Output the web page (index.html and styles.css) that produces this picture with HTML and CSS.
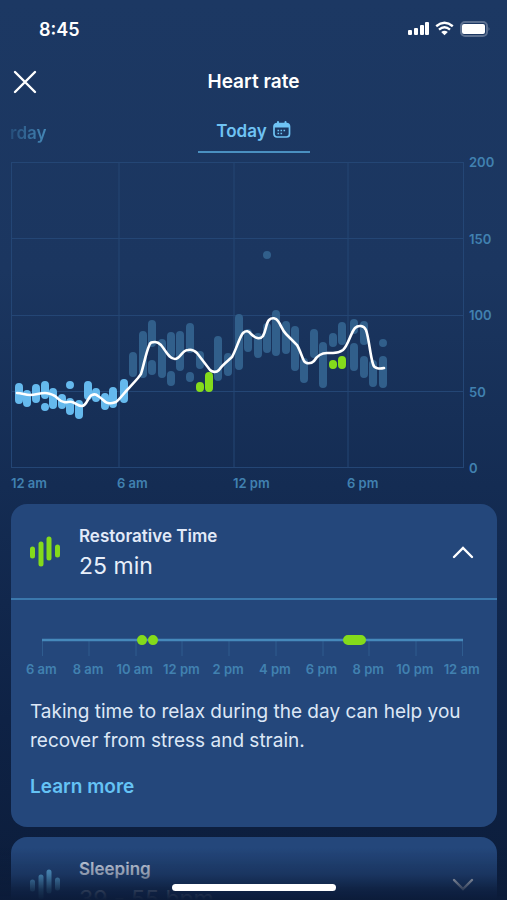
FILE: index.html
```html
<!DOCTYPE html>
<html lang="en">
<head>
    <meta charset="UTF-8">
    <meta name="viewport" content="width=device-width, initial-scale=1.0">
    <title>Heart rate</title>
    <link rel="stylesheet" href="styles.css">
</head>
<body>

    <div class="screen">
        <div class="status-bar">
            <span class="time">8:45</span>
            <svg class="status-icons" width="82" height="16" viewBox="0 0 82 16" aria-hidden="true">
                <g fill="#fff">
                    <rect x="0" y="9" width="4" height="5" rx="1"/>
                    <rect x="6" y="7" width="4" height="7" rx="1"/>
                    <rect x="12" y="4" width="4" height="10" rx="1"/>
                    <rect x="17" y="1" width="4" height="13" rx="1"/>
                    <path d="M36.500 14.200L33.200 11Q36.500 8.600 39.800 11Z"/>
                </g>
                <path d="M28.200 5.200Q36.500 -1.600 44.800 5.200M31 8.600Q36.500 4 42 8.600" fill="none" stroke="#fff" stroke-width="2.400"/>
                <rect x="53" y="1" width="26" height="14" rx="4" fill="none" stroke="#5c7090" stroke-width="2"/>
                <rect x="54" y="3" width="23" height="10" rx="2" fill="#fff"/>
                <path d="M80.500 6Q82.500 8 80.500 10Z" fill="#5c7090"/>
            </svg>
        </div>

        <header class="top-bar">
            <button class="close" aria-label="Close">
                <svg width="24" height="24" viewBox="0 0 24 24"><path d="M2 2L22 22M22 2L2 22"/></svg>
            </button>
            <h1>Heart rate</h1>
        </header>

        <nav class="days">
            <a href="#" class="day previous" aria-label="Yesterday">rday</a>
            <a href="#" class="day current">Today
                <svg width="18" height="18" viewBox="0 0 18 18" aria-hidden="true">
                    <rect x="1" y="2.500" width="15.500" height="13.500" rx="3" fill="none" stroke="currentColor" stroke-width="1.700"/>
                    <path d="M1 6.500V5Q1 2.500 4 2.500H13.500Q16.500 2.500 16.500 5V6.500Z" fill="currentColor"/>
                    <path d="M5 1V4M12.500 1V4" stroke="currentColor" stroke-width="2" stroke-linecap="round"/>
                    <path d="M4.500 9.500H13.500M4.500 12.500H10" stroke="currentColor" stroke-width="1.600" stroke-dasharray="1.600 1.400"/>
                </svg>
            </a>
        </nav>

        <section class="chart">
            <svg class="plot" viewBox="0 0 453 306" role="img" aria-label="Heart rate today">
                <path class="grid-line" d="M0 .5H453M0 76.500H453M0 153.500H453M0 229.500H453M0 305.500H453M.5 0V306M108 0V306M223 0V306M337 0V306M452.500 0V306"/>
                <!-- awake -->
                <path class="bar awake" d="M122 194V211M132 173V212M141 162V181M141 202V209M151 181V212M160 174V192M160 213V220M169 173V205M179 165V187M179 214V216M189 193V203M207 178V215M217 195V210M228 156V204M237 171V186M247 175V192M256 165V187M265 152V190M275 163V188M284 168V205M293 200V217M303 171V192M312 184V222M322 175V181M331 164V179M343 161V168M343 185V205M353 163V179M353 198V212M362 202V221M372 181V181.100M372 198V222M256 93V93.100"/>
                <!-- asleep -->
                <path class="bar asleep" d="M8 225V238M16 232V241M25 226V237M34 223V233M34 245V245.100M42 230V243M51 236V243M59 223V223.100M59 240V249M68 242V253M77 223V234M85 230V236M94 235V244M102 229V242M113 221V237"/>
                <!-- restorative -->
                <path class="bar restorative" d="M189 224V226M198 214V226M322 202V203M331 198V203"/>
                <path class="rate" d="M6 231C11 231 14 233 19 233C25 233 28 231 34 231C38 231 40 232 44 234C48 237 49 240 53 240C56 241 58 239 61 240C65 241 67 244 71 244C76 244 77 234 81 233C83 232 85 232 87 234C92 237 94 241 97 241C101 242 102 241 105 240C110 236 113 231 117 227L127 216L130 212C133 202 135 191 138 184C139 180 141 180 144 180C147 180 148 181 150 183C155 189 158 197 164 197C169 197 171 188 177 188C181 187 183 188 186 191L199 208C201 210 205 211 208 208C212 202 217 199 221 195C225 188 229 174 232 171C235 168 238 169 240 172C244 176 249 178 252 174C255 169 255 161 258 158C261 155 265 156 267 159C270 163 271 168 275 172L286 183C289 188 291 195 293 199C295 202 300 202 303 199C306 194 311 191 316 191H322C326 191 329 190 332 188C337 184 340 170 344 166C347 163 353 163 355 168C358 176 359 193 362 202C363 207 369 207 373 206"/>
            </svg>
            <div class="y-axis">
                <span>200</span>
                <span>150</span>
                <span>100</span>
                <span>50</span>
                <span>0</span>
            </div>
            <div class="x-axis">
                <span>12 am</span>
                <span>6 am</span>
                <span>12 pm</span>
                <span>6 pm</span>
            </div>
        </section>

        <section class="card">
            <div class="card-head">
                <svg class="wave green" width="30" height="32" viewBox="0 0 30 32" aria-hidden="true">
                    <path d="M2.500 13V20M11 8V28M19 3V22M27.500 11V19"/>
                </svg>
                <div class="card-title">
                    <h2>Restorative Time</h2>
                    <p>25 min</p>
                </div>
                <button class="toggle" aria-label="Collapse" aria-expanded="true">
                    <svg width="22" height="14" viewBox="0 0 22 14"><path d="M2 12L11 3L20 12"/></svg>
                </button>
            </div>

            <div class="card-body">
                <svg class="timeline" viewBox="0 0 421 22" aria-hidden="true">
                    <path class="tick" d="M.5 6V22M47 6V22M94 6V22M140 6V22M187 6V22M234 6V22M281 6V22M327 6V22M374 6V22M420.500 6V22"/>
                    <path class="track" d="M0 6H421"/>
                    <path class="span" d="M100 6V6.100M111 6V6.100M306 6H319"/>
                </svg>
                <div class="hours">
                    <span>6 am</span>
                    <span>8 am</span>
                    <span>10 am</span>
                    <span>12 pm</span>
                    <span>2 pm</span>
                    <span>4 pm</span>
                    <span>6 pm</span>
                    <span>8 pm</span>
                    <span>10 pm</span>
                    <span>12 am</span>
                </div>
                <p class="text">Taking time to relax during the day can help you recover from stress and strain.</p>
                <a href="#" class="more">Learn more</a>
            </div>
        </section>

        <section class="card">
            <div class="card-head">
                <svg class="wave blue" width="30" height="32" viewBox="0 0 30 32" aria-hidden="true">
                    <path d="M2.500 13V20M11 8V28M19 3V22M27.500 11V19"/>
                </svg>
                <div class="card-title">
                    <h2>Sleeping</h2>
                    <p>39 - 55 bpm</p>
                </div>
                <button class="toggle" aria-label="Expand" aria-expanded="false">
                    <svg width="22" height="14" viewBox="0 0 22 14"><path d="M2 2L11 11L20 2"/></svg>
                </button>
            </div>
        </section>
    </div>

    <div class="fade"></div>
    <div class="home-indicator"></div>

</body>
</html>
```
FILE: styles.css
```css
* {
    box-sizing: border-box;
}

body {
    margin: 0;
    font-family: Inter, "Liberation Sans", sans-serif;
    color: white;
    background: #0c1d3b;
}

h1, h2, p {
    margin: 0;
}

a {
    text-decoration: none;
}

button {
    padding: 0;
    border: none;
    background: none;
    cursor: pointer;
}

svg {
    display: block;
}

.screen {
    height: 100vh;
    overflow-y: auto;
    scrollbar-width: none;
    background: linear-gradient(#1c3863 0%, #1b3660 30%, #142c53 54%, #0e2245 80%, #0c1d3b 100%);
}

/* Status bar */
.status-bar {
    display: flex;
    justify-content: space-between;
    align-items: center;
    height: 58px;
    padding: 0 17px 0 39px;
}

.time {
    font-size: 18px;
    font-weight: 600;
}

/* Header */
.top-bar {
    display: grid;
    grid-template-columns: 48px 1fr 48px;
    align-items: center;
    height: 48px;
}

.close {
    justify-self: start;
    margin-left: 13px;
}

.close path, .toggle path {
    fill: none;
    stroke: white;
    stroke-width: 2.4;
    stroke-linecap: round;
}

h1 {
    text-align: center;
    font-size: 19px;
    font-weight: 600;
    line-height: 24px;
}

/* Day picker */
.days {
    display: grid;
    grid-template-columns: 1fr 112px 1fr;
    height: 47px;
}

.day {
    font-size: 17px;
    font-weight: 600;
    line-height: 24px;
}

.previous {
    padding: 15px 0 0 10px;
    justify-self: start;
    color: transparent;
    background: linear-gradient(to right, #1d3d69, #4487b6);
    background-clip: text;
}

.current {
    display: flex;
    justify-content: center;
    gap: 6px;
    padding-top: 13px;
    color: #6fc3f4;
    border-bottom: 2px solid #4a90c0;
}

.current svg {
    margin-top: 2px;
}

/* Chart */
.chart {
    display: grid;
    grid-template-columns: 1fr 32px;
    column-gap: 5px;
    padding: 9px 6px 0 11px;
}

.plot {
    width: 100%;
}

.grid-line {
    stroke: #244675;
    fill: none;
}

.bar {
    fill: none;
    stroke-width: 8;
    stroke-linecap: round;
}

.awake {
    stroke: #315f8b;
}

.asleep {
    stroke: #65b9ed;
}

.restorative {
    stroke: #84db1b;
}

.rate {
    fill: none;
    stroke: white;
    stroke-width: 2.6;
    stroke-linecap: round;
}

.y-axis, .x-axis, .hours {
    font-size: 13px;
    font-weight: 600;
    line-height: 16px;
    color: #4181b0;
}

.y-axis {
    display: flex;
    flex-direction: column;
    justify-content: space-between;
    margin: -8px 0;
}

.x-axis {
    display: grid;
    grid-template-columns: 106fr 116fr 114fr 117fr;
    margin-top: 7px;
}

/* Cards */
.card {
    margin: 13px 10px 10px 11px;
    border-radius: 16px;
    background: #24477b;
}

.card + .card {
    margin-top: 0;
}

.card-head {
    display: flex;
    align-items: center;
    height: 94px;
    padding: 2px 23px 0 19px;
}

.wave {
    fill: none;
    stroke-width: 5;
    stroke-linecap: round;
}

.green {
    stroke: #84db1b;
}

.blue {
    stroke: #65b9ed;
}

.card-title {
    flex: 1;
    margin-left: 19px;
}

h2 {
    font-size: 17px;
    font-weight: 600;
    line-height: 28px;
    color: #e2eaf8;
}

.card-title p {
    font-size: 23px;
    line-height: 32px;
    color: #e8effa;
}

.card-body {
    padding: 34px 0 28px;
    border-top: 2px solid #3b78ad;
}

.timeline {
    width: calc(100% - 65px);
    margin-left: 31px;
}

.tick {
    stroke: #2f5c8f;
}

.track {
    stroke: #4689bb;
    stroke-width: 2.6;
}

.span {
    stroke: #84db1b;
    stroke-width: 10;
    stroke-linecap: round;
}

.hours {
    display: grid;
    grid-template-columns: repeat(10, 1fr);
    margin: 5px 12px 0 7px;
    text-align: center;
    white-space: nowrap;
}

.text {
    margin: 20px 19px 0;
    font-size: 19px;
    line-height: 29px;
    color: #dde7f6;
}

.more {
    display: inline-block;
    margin: 20px 19px 0;
    font-size: 19px;
    font-weight: 600;
    line-height: 24px;
    color: #65c3f5;
}

/* Bottom overlay */
.fade {
    position: fixed;
    left: 0;
    right: 0;
    bottom: 0;
    height: 52px;
    background: linear-gradient(rgba(12, 28, 58, 0), rgba(12, 28, 58, 0.4) 50%, rgba(12, 28, 58, 0.85) 80%, #0c1c3a);
    pointer-events: none;
}

.home-indicator {
    position: fixed;
    left: 50%;
    bottom: 9px;
    width: 164px;
    height: 7px;
    border-radius: 4px;
    background: white;
    transform: translateX(-50%);
}
```
